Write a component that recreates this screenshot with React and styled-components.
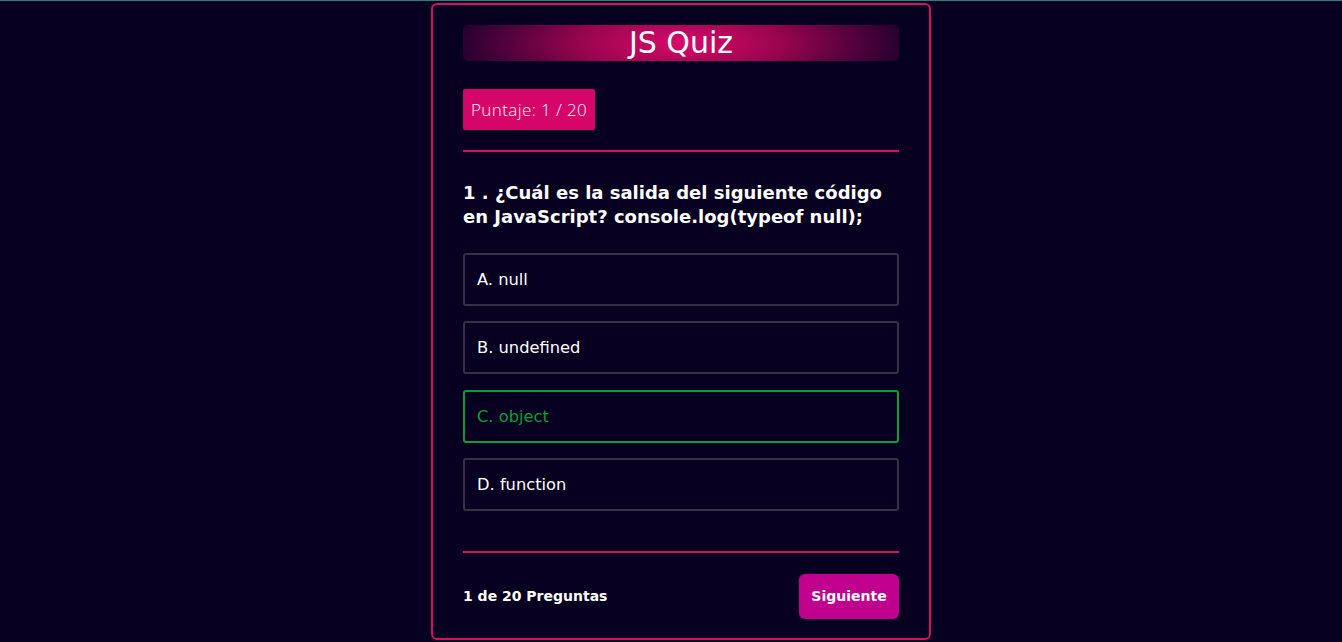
import React from "react";
import styled, { createGlobalStyle } from "styled-components";

const Global = createGlobalStyle`
  html, body { margin: 0; padding: 0; background: #070020; }
  body { font-family: "DejaVu Sans", "Open Sans", sans-serif; color: #fff; }
  * { box-sizing: border-box; }
`;

const Page = styled.div`
  min-height: 642px;
  border-top: 1px solid #2c7f80;
  display: flex;
  justify-content: center;
  padding: 2px 0 0 20px;
`;

const Card = styled.div`
  width: 500px;
  height: 637px;
  border: 2px solid #d60f62;
  border-radius: 6px;
  padding: 20px 30px 19px;
  display: flex;
  flex-direction: column;
`;

const TitleBar = styled.h1`
  margin: 0;
  height: 36px;
  border-radius: 5px;
  background: radial-gradient(ellipse 50% 170% at 50% 50%, #d80a6c 0%, #9b0550 45%, #2a0030 100%);
  font-size: 30px;
  font-weight: 400;
  line-height: 36px;
  text-align: center;
  color: #fff;
`;

const Score = styled.div`
  align-self: flex-start;
  margin-top: 28px;
  height: 41px;
  padding: 0 8px;
  background: #d6056a;
  border-radius: 2px;
  font-family: "Open Sans", sans-serif;
  font-size: 17px;
  font-weight: 300;
  letter-spacing: 0.4px;
  line-height: 41px;
  color: #fff;
`;

const Divider = styled.hr`
  margin: ${p => p.$mt}px 0 0;
  border: none;
  height: 2px;
  background: #d60f62;
`;

const Question = styled.h2`
  margin: 29px 0 0;
  font-size: 18px;
  font-weight: 700;
  line-height: 24px;
  color: #fff;
`;

const Options = styled.div`
  margin-top: 24px;
  display: flex;
  flex-direction: column;
  gap: 15.4px;
`;

const Option = styled.div`
  height: 53px;
  border: 2px solid ${p => (p.$correct ? "#0c9e36" : "#383045")};
  border-radius: 3px;
  padding: 0 12px;
  display: flex;
  align-items: center;
  font-size: 16.3px;
  color: ${p => (p.$correct ? "#0c9e36" : "#fff")};
`;

const Footer = styled.div`
  margin-top: 21px;
  display: flex;
  justify-content: space-between;
  align-items: center;
`;

const Count = styled.span`
  font-size: 14px;
  font-weight: 700;
  color: #fff;
`;

const NextButton = styled.button`
  width: 100px;
  height: 45px;
  border: none;
  border-radius: 6px;
  background: #c20090;
  color: #fff;
  font-family: inherit;
  font-size: 14px;
  font-weight: 700;
`;

const options = ["A. null", "B. undefined", "C. object", "D. function"];

export default function App() {
  return (
    <>
      <Global />
      <Page>
        <Card>
          <TitleBar>JS Quiz</TitleBar>
          <Score>Puntaje: 1 / 20</Score>
          <Divider $mt={20} />
          <Question>1 . ¿Cuál es la salida del siguiente código en JavaScript? console.log(typeof null);</Question>
          <Options>
            {options.map((o, i) => (
              <Option key={o} $correct={i === 2}>{o}</Option>
            ))}
          </Options>
          <Divider $mt={40} />
          <Footer>
            <Count>1 de 20 Preguntas</Count>
            <NextButton>Siguiente</NextButton>
          </Footer>
        </Card>
      </Page>
    </>
  );
}
